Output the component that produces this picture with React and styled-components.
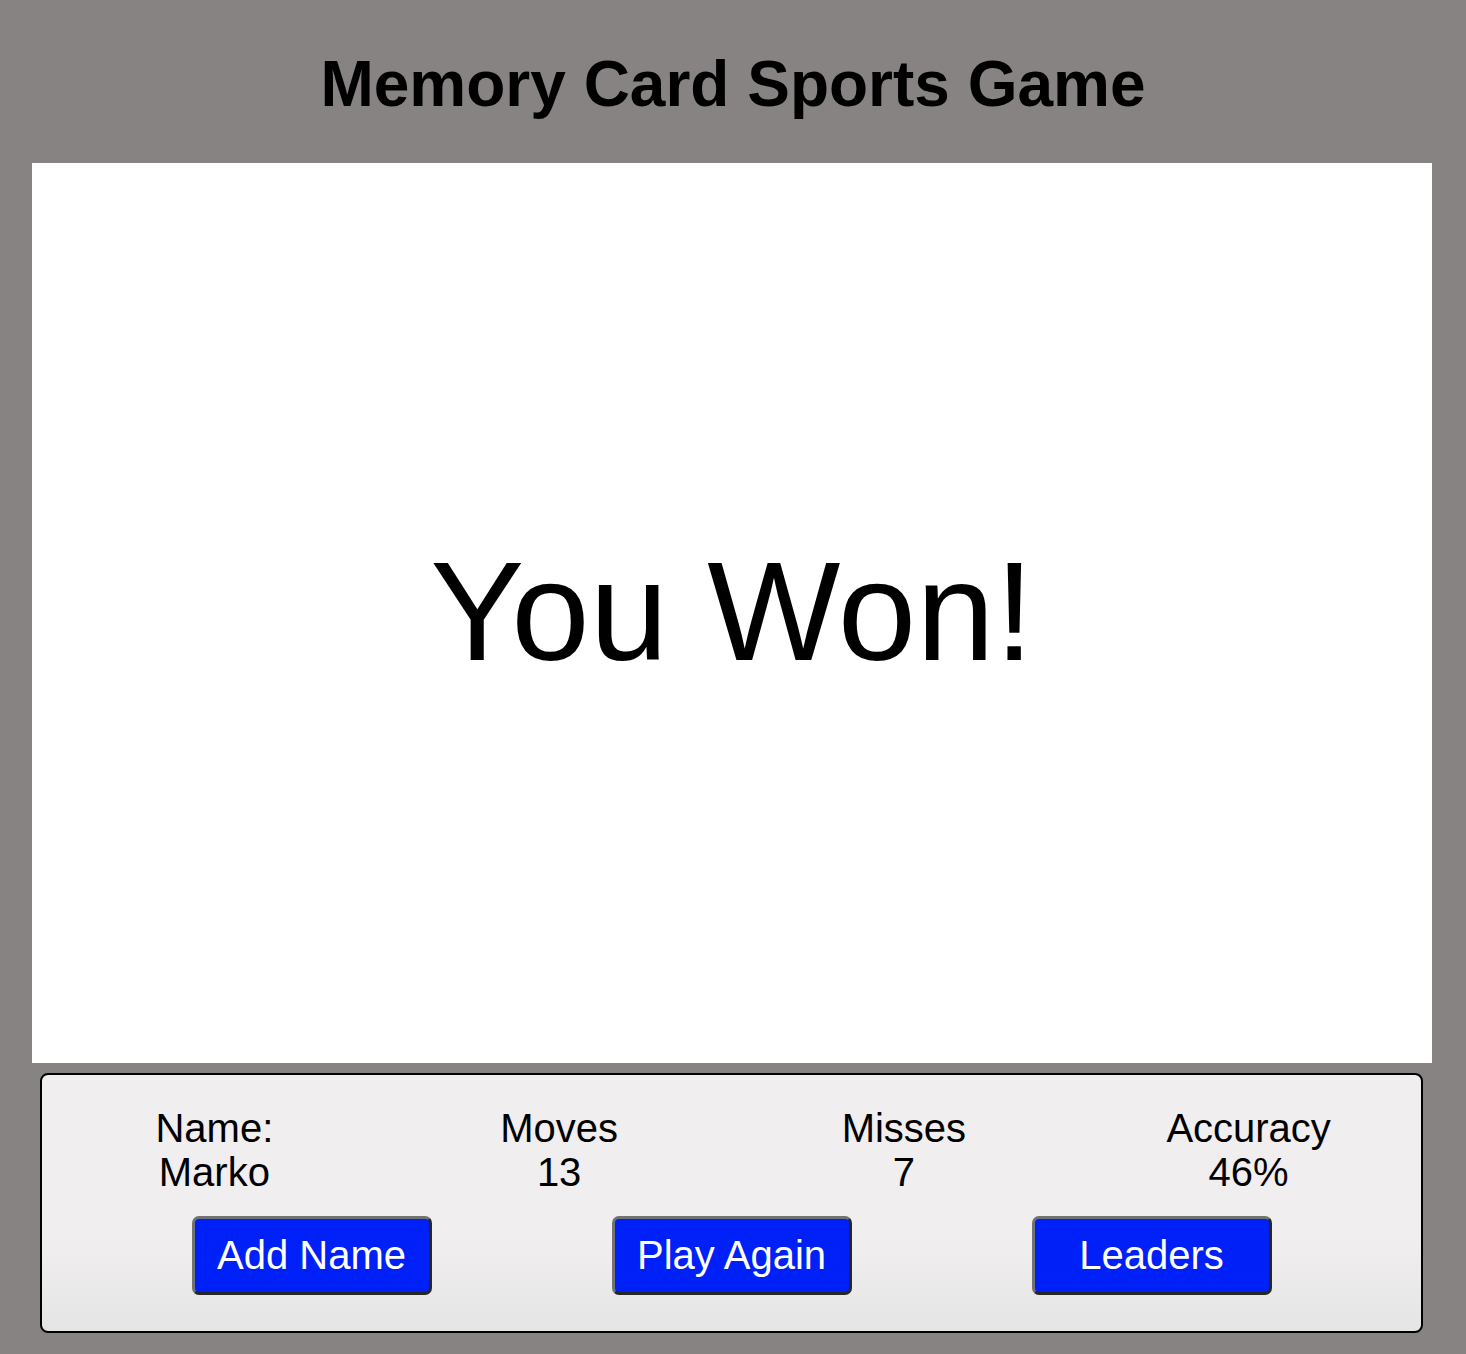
import React from "react";
import styled, { createGlobalStyle } from "styled-components";

const GlobalStyle = createGlobalStyle`
  html, body {
    margin: 0;
    padding: 0;
    background: #878382;
    font-family: "Liberation Sans", Arial, Helvetica, sans-serif;
  }
  #root {
    min-height: 1354px;
  }
`;

const Page = styled.div`
  padding: 48px 0 22px 32px;
  width: 1400px;
`;

const Title = styled.h1`
  margin: 0 0 41px;
  font-size: 64px;
  font-weight: 700;
  line-height: 73.5px;
  text-align: center;
  color: #000;
  padding-left: 2px;
`;

const Board = styled.main`
  width: 1400px;
  height: 900px;
  background: #ffffff;
  display: flex;
  align-items: center;
  justify-content: center;
`;

const Result = styled.div`
  font-size: 141px;
  line-height: 1.15;
  color: #000;
  margin-top: -2px;
`;

const Panel = styled.section`
  margin: 10px 9px 0 8px;
  border: 2px solid #000;
  border-radius: 8px;
  background: linear-gradient(#f0eeef 0%, #f0eeef 65%, #e6e5e6 100%);
  padding: 31px 0 36px;
`;

const Stats = styled.div`
  display: grid;
  grid-template-columns: repeat(4, 1fr);
`;

const Stat = styled.div`
  text-align: center;
  font-size: 40px;
  line-height: 44px;
  color: #000;
`;

const Actions = styled.div`
  display: flex;
  justify-content: center;
  gap: 180px;
  margin-top: 22px;
`;

const Button = styled.button`
  width: 240px;
  height: 79px;
  box-sizing: border-box;
  border-width: 3px;
  border-style: solid;
  border-color: #727272 #262626 #262626 #727272;
  border-radius: 7px;
  background: #0020f8;
  color: #fff;
  font-family: "Liberation Sans", Arial, Helvetica, sans-serif;
  font-size: 40px;
  line-height: 1;
  padding: 0;
  display: flex;
  align-items: center;
  justify-content: center;
  cursor: pointer;
`;

const stats = [
  { label: "Name:", value: "Marko" },
  { label: "Moves", value: "13" },
  { label: "Misses", value: "7" },
  { label: "Accuracy", value: "46%" },
];

export default function App() {
  return (
    <>
      <GlobalStyle />
      <Page>
        <Title>Memory Card Sports Game</Title>
        <Board>
          <Result>You Won!</Result>
        </Board>
        <Panel>
          <Stats>
            {stats.map((s) => (
              <Stat key={s.label}>
                <div>{s.label}</div>
                <div>{s.value}</div>
              </Stat>
            ))}
          </Stats>
          <Actions>
            <Button>Add Name</Button>
            <Button>Play Again</Button>
            <Button>Leaders</Button>
          </Actions>
        </Panel>
      </Page>
    </>
  );
}
